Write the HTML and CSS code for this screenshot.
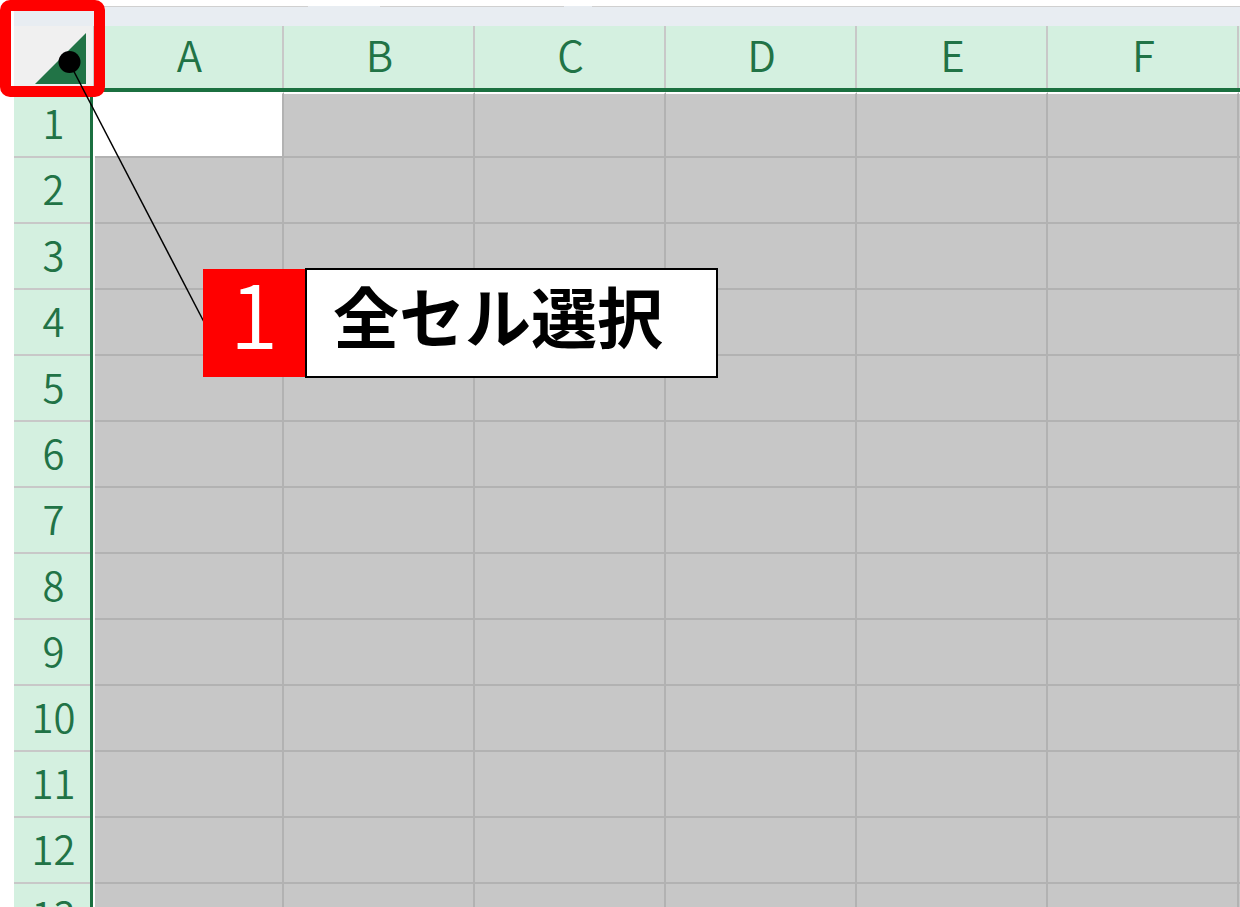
FILE: index.html
```html
<!DOCTYPE html>
<html lang="ja">
<head>
    <meta charset="utf-8">
    <title>全セル選択</title>
    <link rel="stylesheet" href="styles.css">
</head>
<body>
<div class="sheet">
    <div class="ribbon-edge"></div>
    <table class="grid">
        <colgroup>
            <col class="col-head">
            <col class="col-first">
            <col class="col"><col class="col"><col class="col"><col class="col"><col class="col"><col class="col">
        </colgroup>
        <thead>
            <tr>
                <td class="corner">
                    <button type="button" class="select-all" aria-label="全セル選択">
                        <svg width="52" height="52" viewBox="0 0 52 52"><path d="M52 0V51H1Z" fill="#217346"/></svg>
                    </button>
                </td>
                <th scope="col">A</th>
                <th scope="col">B</th>
                <th scope="col">C</th>
                <th scope="col">D</th>
                <th scope="col">E</th>
                <th scope="col">F</th>
                <th scope="col"></th>
            </tr>
        </thead>
        <tbody id="rows"></tbody>
    </table>
</div>

<!-- callout for step 1 -->
<div class="frame"></div>
<svg class="leader" width="220" height="340" viewBox="0 0 220 340">
    <path d="M69 62L204 322" stroke="#000" stroke-width="1.5"/>
    <circle cx="69.500" cy="62" r="11"/>
</svg>
<div class="callout">
    <span class="callout-number">1</span>
    <span class="callout-text">全セル選択</span>
</div>

<script>
    let rows = document.getElementById('rows');

    for (let i = 1; i <= 13; i++) {
        let row = rows.insertRow();
        let head = document.createElement('th');
        head.scope = 'row';
        head.textContent = i;
        row.appendChild(head);
        for (let j = 0; j < 7; j++) {
            row.insertCell();
        }
    }
    rows.rows[0].cells[1].className = 'active';
</script>
</body>
</html>
```
FILE: styles.css
```css
body {
    margin: 0;
    height: 100vh;
    overflow: hidden;
    background-color: #fff;
    font-family: "Noto Sans CJK JP", sans-serif;
}
.sheet {
    height: 100%;
    box-sizing: border-box;
    padding: 6px 0 0 14px;
    overflow: hidden;
}
.ribbon-edge {
    height: 20px;
    background-color: #e8edf2;
    /* thin top line, broken under the two open tabs */
    background-image: linear-gradient(to right, #d0d0d0 294px, #e8edf2 294px, #e8edf2 366px, #d0d0d0 366px, #d0d0d0 550px, #e8edf2 550px, #e8edf2 578px, #d0d0d0 578px);
    background-size: 100% 1px;
    background-repeat: no-repeat;
}
.grid {
    width: 1416px;
    table-layout: fixed;
    border-collapse: separate;
    border-spacing: 0;
}
.col-head {
    width: 81px;
}
.col-first {
    width: 189px;
}
.col {
    width: 191px;
}
.grid th,
.grid td {
    box-sizing: border-box;
    padding: 0;
    height: 66px;
}
.grid th {
    color: #217346;
    background-color: #d4f0e0;
    font-weight: 350;
    line-height: 50px;
}
.grid thead th,
.grid .corner {
    font-size: 42px;
    border-bottom: 4px solid #1b7040;
    box-shadow: inset -2px 0 #c8c8c8;
}
.grid thead th {
    padding-bottom: 6px;
}
.grid .corner {
    background-color: #f0f0f0;
}
.select-all {
    display: flex;
    width: 77px;
    height: 62px;
    padding: 0 5px 3px 0;
    border: none;
    background: none;
    justify-content: flex-end;
    align-items: flex-end;
    cursor: pointer;
}
.grid tbody th {
    padding-bottom: 6px;
    font-size: 40px;
    /* green edge over the row line, then a white gap next to the cells */
    border-right: 2px solid #fff;
    box-shadow: inset -3px 0 #1b7040, inset 0 -2px #c8c8c8;
}
.grid tbody td {
    background-color: #c7c7c7;
    border-right: 2px solid #b2b2b2;
    border-bottom: 2px solid #b2b2b2;
}
.grid tbody tr:first-child td {
    border-top: 2px solid #fff;
}
.grid tbody .active {
    background-color: #fff;
}
.frame {
    position: absolute;
    top: 0;
    left: 0;
    box-sizing: border-box;
    width: 105px;
    height: 97px;
    border: 11px solid #f00;
    border-radius: 10px;
}
.leader {
    position: absolute;
    top: 0;
    left: 0;
}
.callout {
    position: absolute;
    top: 268px;
    left: 203px;
    display: flex;
    height: 110px;
}
.callout-number {
    width: 102px;
    margin: 1px 0;
    background-color: #f00;
    color: #fff;
    font-size: 88px;
    font-weight: 350;
    line-height: 84px;
    text-align: center;
}
.callout-text {
    padding: 0 53px 0 26px;
    border: 2px solid #000;
    background-color: #fff;
    font-size: 66px;
    font-weight: 700;
    line-height: 88px;
}
```
